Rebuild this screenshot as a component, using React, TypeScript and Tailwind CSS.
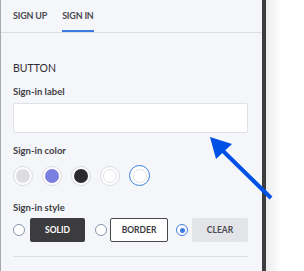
import { useState } from "react";

const COLORS = [
  "bg-[#dcdde3]",
  "bg-[#7b7fe0]",
  "bg-[#2a2a30]",
  "bg-white border border-[#e2e3e8]",
];

type Style = "solid" | "border" | "clear";

function Radio({ on, onClick }: { on: boolean; onClick: () => void }) {
  return (
    <button
      type="button"
      onClick={onClick}
      className={`flex h-[12px] w-[12px] shrink-0 items-center justify-center rounded-full border bg-white ${
        on ? "border-[#3b7de0]" : "border-[#8796ad]"
      }`}
    >
      {on && <span className="h-[5px] w-[5px] rounded-full bg-[#3b7de0]" />}
    </button>
  );
}

export default function App() {
  const [tab, setTab] = useState<"up" | "in">("in");
  const [color, setColor] = useState(4);
  const [style, setStyle] = useState<Style>("clear");
  const [label, setLabel] = useState("");

  return (
    <div className="relative flex h-[271px] w-[304px] overflow-hidden font-['Lato',sans-serif]">
      <div className="flex w-[262px] shrink-0 flex-col border-l border-[#a9a9a9] bg-[#f5f6fa]">
        <div className="flex h-[33px] gap-[15px] border-b border-[#dcdde2] px-[12px]">
          {(
            [
              ["up", "SIGN UP"],
              ["in", "SIGN IN"],
            ] as const
          ).map(([id, text]) => (
            <button
              key={id}
              type="button"
              onClick={() => setTab(id)}
              className={`h-full pt-[1px] text-[9px] font-bold tracking-[-0.2px] text-[#4a4a4f] ${
                tab === id ? "border-b-[2px] border-[#3b7de0]" : "border-b-[2px] border-transparent"
              }`}
            >
              {text}
            </button>
          ))}
        </div>

        <div className="flex flex-col px-[12px]">
          <div className="mt-[28px] text-[10.5px] leading-[14px] text-[#2f2f33]">BUTTON</div>

          <div className="mt-[11px] text-[9.5px] font-bold leading-[12px] text-[#3f3f45]">
            Sign-in label
          </div>
          <input
            value={label}
            onChange={(e) => setLabel(e.target.value)}
            className="mt-[5px] h-[30px] w-[235px] rounded-[2px] border border-[#e0e1e6] bg-white px-2 text-[11px] outline-none"
          />

          <div className="mt-[12px] text-[9.5px] font-bold leading-[12px] text-[#3f3f45]">
            Sign-in color
          </div>
          <div className="mt-[8px] flex items-center gap-[9px]">
            {COLORS.map((fill, i) => (
              <button
                key={i}
                type="button"
                onClick={() => setColor(i)}
                className={`flex h-[20px] w-[20px] items-center justify-center rounded-full border bg-white ${
                  color === i ? "border-[#3b7de0]" : "border-[#dadbe0]"
                }`}
              >
                <span className={`h-[14px] w-[14px] rounded-full ${fill}`} />
              </button>
            ))}
            <button
              type="button"
              onClick={() => setColor(4)}
              className={`flex h-[21px] w-[21px] items-center justify-center rounded-full bg-white ${
                color === 4 ? "border-[1.5px] border-[#3b7de0]" : "border border-[#dadbe0]"
              }`}
            >
              <span className="h-[14px] w-[14px] rounded-full border border-[#e2e3e8] bg-white" />
            </button>
          </div>

          <div className="mt-[16px] text-[9.5px] font-bold leading-[12px] text-[#3f3f45]">
            Sign-in style
          </div>
          <div className="mt-[4px] flex h-[24px] items-center">
            <Radio on={style === "solid"} onClick={() => setStyle("solid")} />
            <div className="ml-[5px] flex h-[24px] w-[55px] items-center justify-center rounded-[2px] bg-[#3c3c3e] text-[8.5px] font-bold text-white">
              SOLID
            </div>
            <div className="ml-[10px]">
              <Radio on={style === "border"} onClick={() => setStyle("border")} />
            </div>
            <div className="ml-[3px] flex h-[24px] w-[58px] items-center justify-center rounded-[2px] border border-[#48484c] bg-white text-[8.5px] font-bold text-[#3c3c40]">
              BORDER
            </div>
            <div className="ml-[8px]">
              <Radio on={style === "clear"} onClick={() => setStyle("clear")} />
            </div>
            <div className="ml-[4px] flex h-[24px] w-[56px] items-center justify-center rounded-[2px] bg-[#e3e4e8] text-[8.5px] font-bold text-[#4a4a4f]">
              CLEAR
            </div>
          </div>

          <div className="mt-[14px] h-px w-[235px] bg-[#dcdde2]" />
        </div>
      </div>

      <div className="w-[4px] shrink-0 bg-[#3d3d3f]" />
      <div className="flex-1 bg-linear-to-r from-[#ececec] to-white to-40%" />

      <svg
        className="pointer-events-none absolute left-0 top-0"
        width="304"
        height="271"
        viewBox="0 0 304 271"
      >
        <line x1="271" y1="198" x2="221" y2="149" stroke="#0050e6" strokeWidth="4" />
        <polygon points="210,137 232,144 216,159" fill="#0050e6" />
      </svg>
    </div>
  );
}
